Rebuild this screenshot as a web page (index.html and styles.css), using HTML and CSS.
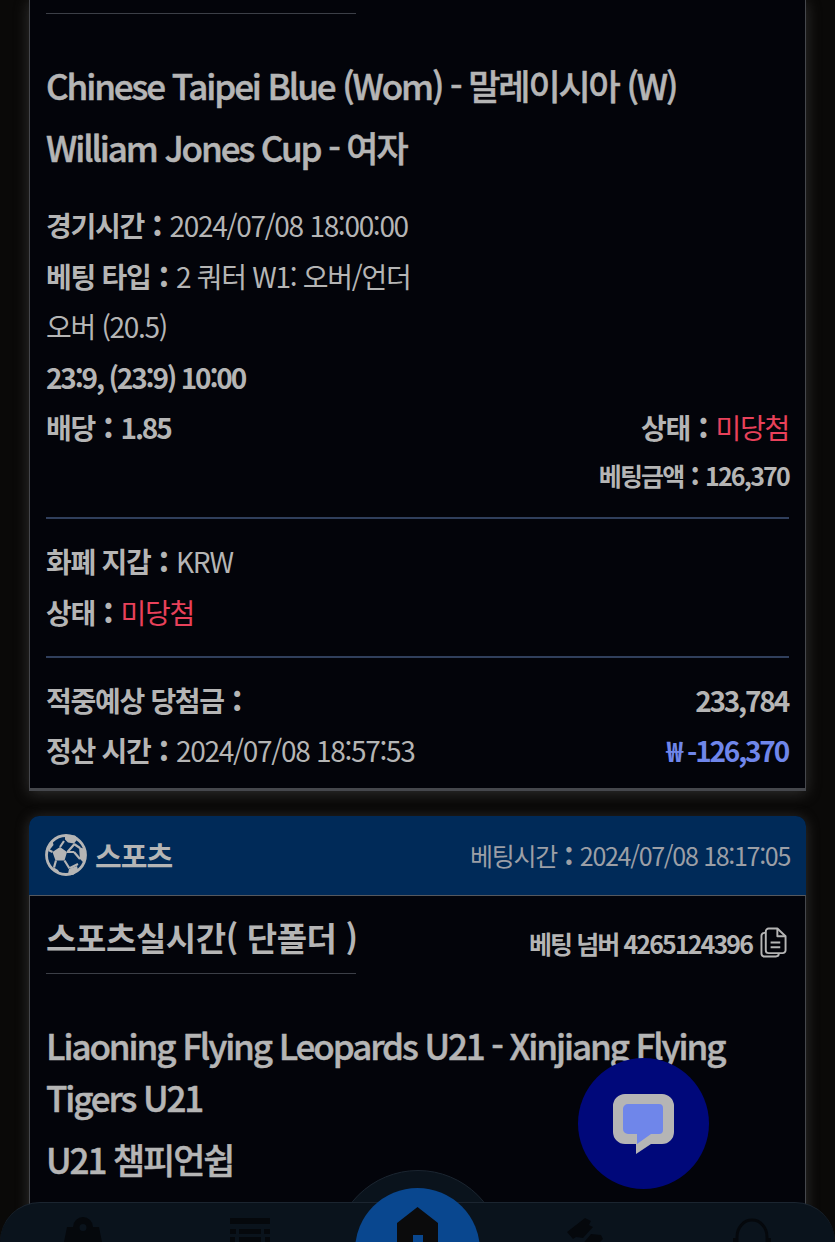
FILE: index.html
```html
<!DOCTYPE html>
<html lang="ko">
<head>
  <meta charset="UTF-8">
  <title>베팅 내역</title>
  <link rel="stylesheet" href="styles.css">
</head>
<body>

<div class="list">
  <section class="card card-cut">
    <div class="card-body">
      <div class="top-row"><div class="market"></div></div>
      <h2 class="match first">Chinese Taipei Blue (Wom) - 말레이시아 (W)</h2>
      <h2 class="match">William Jones Cup - 여자</h2>
      <div class="rows">
        <p class="row"><b>경기시간 <i class="c">:</i></b> 2024/07/08 18:00:00</p>
        <p class="row"><b>베팅 타입 <i class="c">:</i></b> 2 쿼터 W1: 오버/언더</p>
        <p class="row">오버 (20.5)</p>
        <p class="row"><b class="num">23:9, (23:9) 10:00</b></p>
        <div class="row split">
          <b>배당 <i class="c">:</i> <span class="num">1.85</span></b>
          <span><b>상태 <i class="c">:</i></b> <em class="lost">미당첨</em></span>
        </div>
        <div class="row-amount"><b>베팅금액 <i class="c">:</i> 126,370</b></div>
      </div>
      <hr class="rule">
      <div class="rows">
        <p class="row"><b>화폐 지갑 <i class="c">:</i></b> KRW</p>
        <p class="row row-low"><b>상태 <i class="c">:</i></b> <em class="lost">미당첨</em></p>
      </div>
      <hr class="rule">
      <div class="rows">
        <div class="row split">
          <b>적중예상 당첨금 <i class="c">:</i></b>
          <b class="num">233,784</b>
        </div>
        <div class="row split">
          <span><b>정산 시간 <i class="c">:</i></b> 2024/07/08 18:57:53</span>
          <b class="num minus">₩ -126,370</b>
        </div>
      </div>
    </div>
  </section>

  <section class="card card-last">
    <header class="card-head">
      <div class="sport">
        <svg class="ball" viewBox="0 0 42 42">
          <circle cx="21" cy="21" r="19.500" fill="none" stroke="#b5b5b5" stroke-width="2.800"/>
          <path fill="#b5b5b5" d="M15 13l7 5-2.500 8.500h-9L7.500 18zM20 1.500h10l3 3-4 5-6-1-3-3zM1.500 15l3-6 3-2 1 4-4 5zM34 13l6 2 1 8-3 5-3-3zM24 35l8-3 1 4-5 5-5-1zM8 33l5 3 3 5-6-3z"/>
          <path fill="none" stroke="#b5b5b5" stroke-width="2.200" d="M15 13l4-6M22.500 18l7-8M29 10l6 4M22 18l7 0M29 18l6 7M19.500 26.500l5 8M33 30l-8 4M11 26.500l-2 7M7.500 18l-4-2"/>
        </svg>
        <span class="sport-name">스포츠</span>
      </div>
      <span class="bet-time">베팅시간 <i class="c">:</i> 2024/07/08 18:17:05</span>
    </header>
    <div class="card-body">
      <div class="top-row">
        <div class="market">스포츠실시간( 단폴더 )</div>
        <div class="bet-no">
          베팅 넘버 4265124396
          <svg class="copy" viewBox="0 0 28 32" fill="none" stroke="#b5b5b5" stroke-width="2" stroke-linejoin="round">
            <path d="M6 6H4.500A3 3 0 0 0 1.500 9v18.500a3 3 0 0 0 3 3h12a3 3 0 0 0 3-3V27"/>
            <path d="M6 4.500a3 3 0 0 1 3-3h9l8.500 8v14.500a3 3 0 0 1-3 3H9a3 3 0 0 1-3-3z"/>
            <path d="M18 1.500v8h8.500M11 16h10M11 21h10"/>
          </svg>
        </div>
      </div>
      <h2 class="match first">Liaoning Flying Leopards U21 - Xinjiang Flying Tigers U21</h2>
      <h2 class="match">U21 챔피언쉽</h2>
    </div>
  </section>
</div>

<button class="chat">
  <svg viewBox="0 0 61 60" width="61" height="60">
    <path fill="#b5b5b5" d="M12 0H49a12 12 0 0 1 12 12V38a12 12 0 0 1-12 12H38L23 60V50H12A12 12 0 0 1 0 38V12A12 12 0 0 1 12 0z"/>
    <path fill="#6f86ea" d="M15 10H46a4 4 0 0 1 4 4V36a4 4 0 0 1-4 4H38L24 50V40H15a5 5 0 0 1-5-5V15a5 5 0 0 1 5-5z"/>
  </svg>
</button>

<nav class="tabbar">
  <div class="tab-bump"></div>
  <div class="tab-strip">
    <svg class="tab-icon" viewBox="0 0 40 30"><path fill-rule="evenodd" d="M20 0a10 10 0 0 1 10 10h6l4 20H0l4-20h6A10 10 0 0 1 20 0zm0 7a3.500 3.500 0 1 0 0 7 3.500 3.500 0 0 0 0-7z"/></svg>
    <svg class="tab-icon" viewBox="0 0 40 30"><path d="M0 1h40v6H0zM0 12h6v5H0zM9 12h22v5H9zM34 12h6v5h-6zM0 20h5v10H0zM9 20h22v10H9zM35 20h5v10h-5z"/></svg>
    <div class="tab-gap"></div>
    <svg class="tab-icon" viewBox="0 0 40 30"><path d="M2 15L20 1l6 3-2 4 4 2-10 11-7-1-3 2zM26 17l10 1 2 4-8 8H15z"/></svg>
    <svg class="tab-icon" viewBox="0 0 40 30"><path fill="none" stroke-width="3" d="M5 26V20a15 17 0 0 1 30 0v6"/><path d="M1 21h5v9H1zM34 21h5v9h-5z"/></svg>
  </div>
  <div class="tab-home">
    <svg viewBox="0 0 41 36" width="41" height="36">
      <path fill="#0b0b0c" d="M20.500 0L41 16v20H0V16z"/>
      <rect x="16" y="28" width="10" height="8" fill="#09478f"/>
    </svg>
  </div>
</nav>

</body>
</html>
```

FILE: styles.css
```css
html,
body {
  height: 100%;
  margin: 0;
  overflow: hidden;
}

body {
  position: relative;
  background: #0a0908;
  color: #b5b5b5;
  font-family: "Noto Sans CJK KR", "Noto Sans", sans-serif;
  font-size: 28px;
  letter-spacing: -1.3px;
}

.list {
  box-sizing: border-box;
  height: 1242px;
  overflow: hidden;
  display: flex;
  flex-direction: column;
  gap: 25px;
  padding: 0 29px;
}

.card {
  border-radius: 10px 10px 0 0;
  box-shadow: 0 2px 14px rgba(110, 110, 110, 0.4);
}

.card-cut {
  border-radius: 0;
}

.card-last {
  flex: 1;
  display: flex;
  flex-direction: column;
}

.card-last .card-body {
  flex: 1;
}

.card-head {
  display: flex;
  justify-content: space-between;
  align-items: center;
  height: 79px;
  padding: 0 16px;
  background: #002a58;
  border-radius: 10px 10px 0 0;
}

.sport {
  display: flex;
  align-items: center;
  gap: 8px;
}

.ball {
  width: 42px;
  height: 42px;
}

.sport-name {
  font-size: 29px;
  font-weight: 700;
  letter-spacing: -0.9px;
}

.bet-time {
  font-size: 25px;
  color: #9c9fa6;
}

.card-body {
  padding: 0 16px 12px;
  background: #03040a;
  border: 1px solid #45474c;
  border-top-width: 0;
  border-bottom-width: 3px;
}

.card-head + .card-body {
  border-top-width: 1px;
  border-top-color: #55585e;
}

.top-row {
  display: flex;
  justify-content: space-between;
  align-items: center;
}

.market {
  box-sizing: border-box;
  width: 310px;
  height: 14px;
  border-bottom: 1px solid #3c3f47;
  font-size: 33px;
  font-weight: 700;
  letter-spacing: -0.4px;
  white-space: nowrap;
}

.card-head + .card-body .top-row {
  height: 78px;
}

.card-head + .card-body .market {
  height: 78px;
  line-height: 82px;
}

.bet-no {
  display: flex;
  align-items: center;
  gap: 8px;
  margin: 16px 2px 0 0;
  font-size: 25px;
  font-weight: 700;
  letter-spacing: -1.9px;
}

.copy {
  width: 27px;
  height: 31px;
}

.match {
  margin: 0;
  font-size: 35px;
  font-weight: 500;
  letter-spacing: -2.100px;
  line-height: 52px;
  -webkit-text-stroke: 0.5px #b5b5b5;
}

.match.first {
  margin-top: 45px;
}

.match + .match {
  margin-top: 10px;
}

.rows {
  margin-top: 27px;
}

.row {
  display: block;
  margin: 0;
  height: 50.500px;
  line-height: 50.500px;
  font-weight: 400;
}

.row-low {
  padding-top: 1px;
}

.row b {
  font-weight: 700;
}

.c {
  margin: 0 2px;
  font-style: normal;
  font-weight: 900;
}

.num {
  letter-spacing: -2.200px;
}

.split .num {
  margin-right: 1px;
}

.split {
  display: flex;
  justify-content: space-between;
}

.row-amount {
  margin-top: -2px;
  text-align: right;
  font-size: 25px;
  letter-spacing: -1.800px;
  line-height: 48px;
}

.row em {
  font-style: normal;
}

.lost {
  color: #e8415a;
}

.minus {
  color: #6f86ea;
  word-spacing: 2px;
}

.rule {
  height: 2px;
  margin: 18px 0 0;
  border: 0;
  background: #303f5c;
}

.row-low + .rule {
  margin-top: 17px;
}

.rule + .rows {
  margin-top: 17px;
}

.chat {
  position: absolute;
  left: 578px;
  top: 1058px;
  width: 131px;
  height: 131px;
  display: flex;
  align-items: center;
  justify-content: center;
  padding: 0;
  border: 0;
  border-radius: 50%;
  background: #00087a;
}

/* the strip is cut by the bottom of the window */
.tabbar {
  position: absolute;
  left: 0;
  right: 0;
  top: 1170px;
  height: 72px;
  overflow: hidden;
}

.tab-bump {
  position: absolute;
  left: 333px;
  top: 0;
  width: 170px;
  height: 170px;
  box-sizing: border-box;
  border-radius: 50%;
  background: #0a131c;
  border: 1px solid #1b2530;
}

.tab-strip {
  position: absolute;
  left: 0;
  right: 0;
  top: 32px;
  height: 60px;
  box-sizing: border-box;
  display: flex;
  align-items: flex-start;
  gap: 127px;
  padding: 14px 63px 0;
  background: #0a131c;
  border-top: 1px solid #1b2530;
  border-radius: 40px 40px 0 0;
}

.tab-gap {
  width: 41px;
}

.tab-icon {
  width: 40px;
  height: 30px;
  fill: #05080c;
  stroke: #05080c;
  stroke-width: 0;
}

.tab-icon path[fill="none"] {
  stroke-width: 3;
}

.tab-home {
  position: absolute;
  left: 355px;
  top: 18px;
  width: 125px;
  height: 125px;
  display: flex;
  justify-content: center;
  padding-top: 19px;
  box-sizing: border-box;
  border-radius: 50%;
  background: #09478f;
}
```
